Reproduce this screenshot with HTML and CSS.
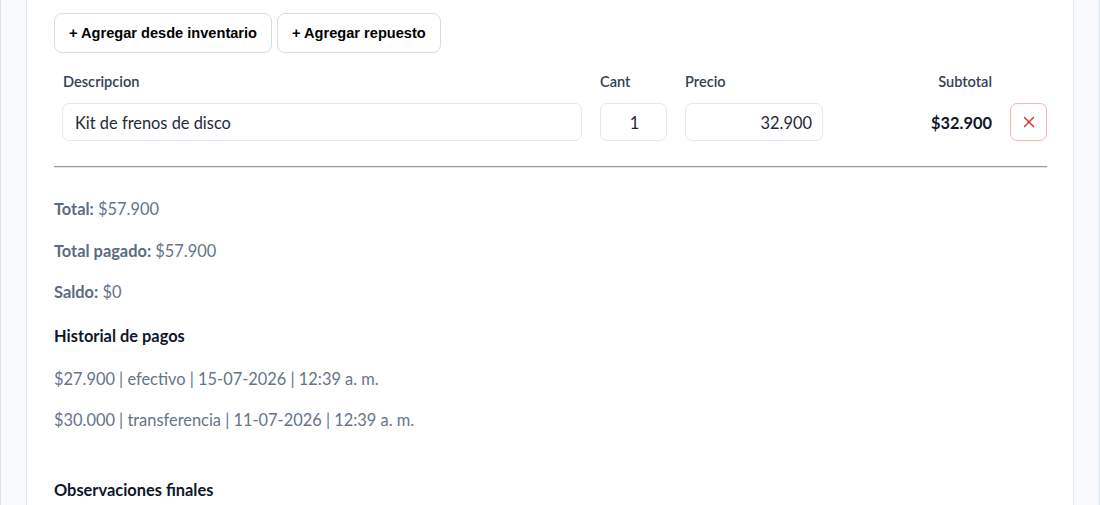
FILE: index.html
```html
<!DOCTYPE html>
<html>
<head>
  <meta http-equiv="content-type" content="text/html; charset=utf-8" />
  <title>Orden de trabajo - Repuestos</title>
  <link rel="stylesheet" href="styles.css">
</head>

<body>
  <div class="page">
    <div class="card">
      <div class="actions">
        <button class="btn">+ Agregar desde inventario</button>
        <button class="btn">+ Agregar repuesto</button>
      </div>

      <div class="items">
        <div class="item-row head">
          <span>Descripcion</span>
          <span>Cant</span>
          <span>Precio</span>
          <span class="right">Subtotal</span>
          <span></span>
        </div>
        <div class="item-row">
          <input class="field" type="text" value="Kit de frenos de disco">
          <input class="field center" type="text" value="1">
          <input class="field right" type="text" value="32.900">
          <span class="subtotal">$32.900</span>
          <button class="btn-remove" title="Quitar">
            <svg width="14" height="14" viewBox="0 0 14 14">
              <path d="M2.5 2.5 L11.5 11.5 M11.5 2.5 L2.5 11.5" stroke="#dc2626" stroke-width="1.4" fill="none" stroke-linecap="round"/>
            </svg>
          </button>
        </div>
      </div>

      <hr>

      <div class="summary">
        <p><b>Total:</b> $57.900</p>
        <p><b>Total pagado:</b> $57.900</p>
        <p><b>Saldo:</b> $0</p>
      </div>

      <h4>Historial de pagos</h4>
      <div class="payments">
        <p>$27.900 | efectivo | 15-07-2026 | 12:39 a. m.</p>
        <p>$30.000 | transferencia | 11-07-2026 | 12:39 a. m.</p>
      </div>

      <h4 class="notes-title">Observaciones finales</h4>
    </div>
  </div>
</body>

</html>
```

FILE: styles.css
```css
body {
  margin: 0;
  font-family: "Segoe UI", Lato, "Noto Sans", sans-serif;
  font-size: 16.4px;
  color: #0f172a;
}
.page {
  background: #f8fafc;
  border-left: 1px solid #d8e3f0;
  border-right: 1px solid #d8e3f0;
  padding: 0 25px;
}
.card {
  background: #fff;
  border: 1px solid #e3e9f1;
  border-top: 0;
  padding: 13px 26px 20px 27px;
}
.actions {
  display: flex;
  gap: 5px;
}
.btn {
  font-family: "Liberation Sans", Arial, sans-serif;
  font-weight: bold;
  font-size: 14.6px;
  color: #000;
  background: #fff;
  border: 1px solid #d4deea;
  border-radius: 8px;
  height: 40px;
  padding: 0 14px;
}
.items {
  padding-left: 8px;
  margin-top: 19px;
}
.item-row {
  display: grid;
  grid-template-columns: 1fr 67px 138px 151px 37px;
  column-gap: 18px;
  align-items: center;
}
.item-row.head {
  font-size: 14.6px;
  font-weight: 600;
  color: #334155;
  line-height: 20px;
  margin-bottom: 11px;
}
.item-row.head span:first-child {
  padding-left: 1px;
}
.right {
  text-align: right;
}
.center {
  text-align: center;
}
.field {
  font-family: inherit;
  font-size: 16.4px;
  color: #1e293b;
  height: 38px;
  box-sizing: border-box;
  border: 1px solid #dfe7f2;
  border-radius: 7px;
  padding: 0 10px 0 12px;
  width: 100%;
  background: #fff;
}
.subtotal {
  font-weight: bold;
  text-align: right;
}
.btn-remove {
  width: 37px;
  height: 38px;
  background: #fff;
  border: 1px solid #fbb4b4;
  border-radius: 7px;
  display: flex;
  align-items: center;
  justify-content: center;
  padding: 0;
}
hr {
  margin: 25px 0 28px;
  border: 0;
  border-top: 1px solid #9a9a9a;
  border-bottom: 1px solid #e4e4e4;
}
.summary p,
.payments p {
  margin: 16px 0;
  line-height: 25.6px;
  color: #64748b;
}
.summary b {
  color: #5b6b82;
}
h4 {
  font-size: 16.4px;
  font-weight: bold;
  line-height: 19px;
  margin: 21px 0;
  color: #0f172a;
}
.notes-title {
  margin-top: 47px;
}
```
